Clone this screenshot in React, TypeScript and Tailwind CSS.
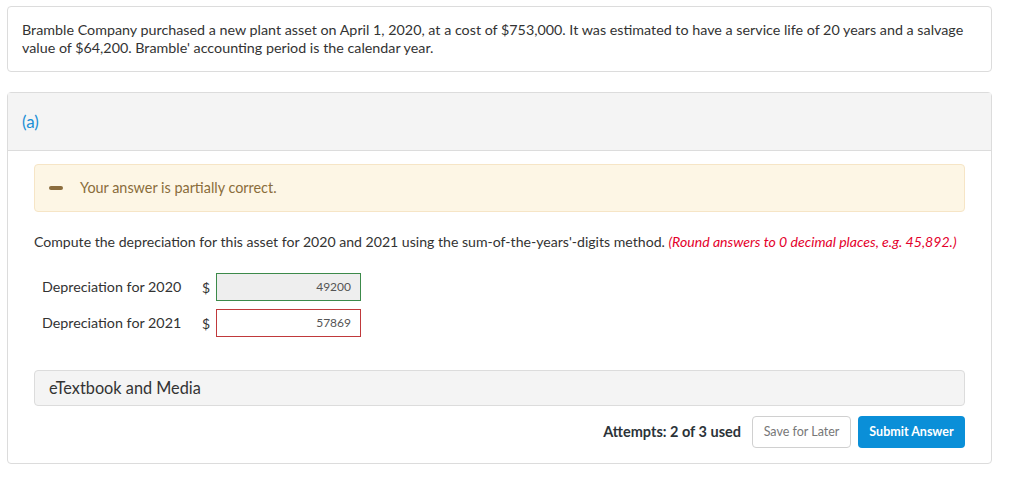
import React from 'react';

export default function App() {
  return (
    <div className="min-h-screen bg-white pl-[7px] pr-[21px] pt-[6px] text-[#333] font-['Lato','Liberation_Sans',sans-serif]">
      {/* enunciado */}
      <div className="rounded border border-[#dcdcdc] px-[14px] pt-[14px] pb-[14px] text-[14.3px] leading-[18px]">
        Bramble Company purchased a new plant asset on April 1, 2020, at a cost of $753,000. It was estimated to have a service life of 20 years and a salvage
        value of $64,200. Bramble' accounting period is the calendar year.
      </div>

      {/* parte (a) */}
      <div className="mt-[20px] rounded border border-[#dcdcdc]">
        <div className="h-[58px] bg-[#f4f4f4] border-b border-[#dcdcdc] flex items-center px-[14px]">
          <span className="text-[17px] text-[#1a8fd6]">(a)</span>
        </div>

        <div className="px-[26px] pt-[13px] pb-[15px]">
          <div className="h-[48px] flex items-center border border-[#f6e5c6] bg-[#fdf6e5] rounded-sm pl-[14px]">
            <span className="w-[14px] h-[4px] rounded-sm bg-[#8b6d3e]" />
            <span className="ml-[17px] text-[14.4px] text-[#8a6d3b]">Your answer is partially correct.</span>
          </div>

          <p className="mt-[21px] text-[14.1px] leading-[18px]">
            Compute the depreciation for this asset for 2020 and 2021 using the sum-of-the-years'-digits method.{' '}
            <span className="italic text-[#e4002b]">(Round answers to 0 decimal places, e.g. 45,892.)</span>
          </p>

          <div className="mt-[22px] pl-[8px] flex flex-col gap-[8px]">
            <div className="flex items-center">
              <span className="w-[160px] text-[14.3px]">Depreciation for 2020</span>
              <span className="w-[14px] text-[14px]">$</span>
              <div className="w-[145px] h-[28px] border border-[#3c8a4a] bg-[#eeeeee] flex items-center justify-end pr-[9px] text-[12px] text-[#555]">49200</div>
            </div>
            <div className="flex items-center">
              <span className="w-[160px] text-[14.3px]">Depreciation for 2021</span>
              <span className="w-[14px] text-[14px]">$</span>
              <div className="w-[145px] h-[28px] border border-[#c0393b] bg-white flex items-center justify-end pr-[9px] text-[12px] text-[#555]">57869</div>
            </div>
          </div>

          <div className="mt-[33px] h-[36px] rounded border border-[#dcdcdc] bg-[#f4f4f4] flex items-center px-[14px] text-[16.3px]">
            eTextbook and Media
          </div>

          <div className="mt-[10px] flex items-center justify-end">
            <span className="text-[14.5px] font-bold text-[#2c3338]">Attempts: 2 of 3 used</span>
            <button className="ml-[11px] w-[99px] h-[32px] rounded border border-[#d0d0d0] bg-white text-[12.5px] text-[#777]">Save for Later</button>
            <button className="ml-[7px] w-[107px] h-[32px] rounded bg-[#0a8fd8] text-[12.5px] font-bold text-white">Submit Answer</button>
          </div>
        </div>
      </div>
    </div>
  );
}
